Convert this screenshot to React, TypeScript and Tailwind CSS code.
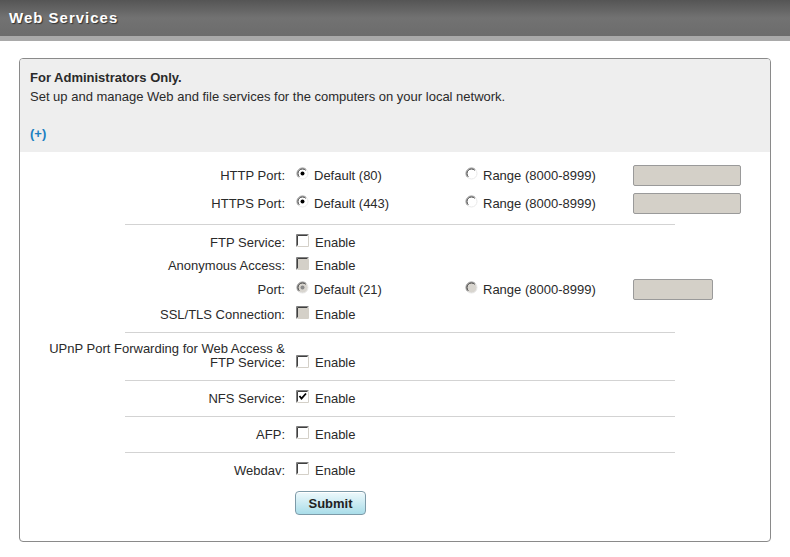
import React from "react";

function Radio({ checked = false, disabled = false }: { checked?: boolean; disabled?: boolean }) {
  return (
    <svg width="13" height="13" viewBox="0 0 13 13" className="shrink-0 -mt-[3px]">
      <circle cx="6.5" cy="6.5" r="5.5" fill={disabled ? "#d8d5cf" : "#ffffff"} />
      <path d="M2.6 10.4 A5.5 5.5 0 0 1 10.4 2.6" fill="none" stroke="#8a8a8a" strokeWidth="1" />
      <path d="M3.3 9.7 A4.5 4.5 0 0 1 9.7 3.3" fill="none" stroke="#404040" strokeWidth="1" />
      <path d="M10.4 2.6 A5.5 5.5 0 0 1 2.6 10.4" fill="none" stroke="#e8e8e8" strokeWidth="1" />
      {checked && <circle cx="6.5" cy="6.5" r="2" fill={disabled ? "#8a8a8a" : "#000000"} />}
    </svg>
  );
}

function Check({ checked = false, disabled = false }: { checked?: boolean; disabled?: boolean }) {
  return (
    <svg width="13" height="13" viewBox="0 0 13 13" className="shrink-0 -mt-[3px]">
      <rect x="0" y="0" width="13" height="13" fill="#ffffff" />
      <rect x="2" y="2" width="10" height="10" fill={disabled ? "#d4d0c8" : "#ffffff"} />
      <path d="M0.5 12.5 V0.5 H12.5" fill="none" stroke="#808080" strokeWidth="1" />
      <path d="M1.5 11.5 V1.5 H11.5" fill="none" stroke="#404040" strokeWidth="1" />
      <path d="M1.5 12.5 H12.5 V1.5" fill="none" stroke="#d4d0c8" strokeWidth="1" />
      {checked && <path d="M3.5 6 L5.5 8.5 L10 3.5" fill="none" stroke="#000000" strokeWidth="1.8" />}
    </svg>
  );
}

function Row({ label, children, className = "" }: { label: React.ReactNode; children: React.ReactNode; className?: string }) {
  return (
    <div className={`flex items-center h-[24px] ${className}`}>
      <div className="w-[265px] text-right shrink-0">{label}</div>
      <div className="ml-[11px] flex items-center">{children}</div>
    </div>
  );
}

function Opt({ children, checked, disabled }: { children: React.ReactNode; checked?: boolean; disabled?: boolean }) {
  return (
    <span className="flex items-center gap-[5px]">
      <Radio checked={checked} disabled={disabled} />
      <span>{children}</span>
    </span>
  );
}

function Enable({ checked, disabled }: { checked?: boolean; disabled?: boolean }) {
  return (
    <span className="flex items-center gap-[6px]">
      <Check checked={checked} disabled={disabled} />
      <span>Enable</span>
    </span>
  );
}

function PortInput({ w }: { w: string }) {
  return <div className={`${w} h-[21px] bg-[#d4d0c8] border border-[#9a9a9a] rounded-[2px]`} />;
}

function Divider() {
  return <div className="ml-[105px] w-[550px] h-px bg-[#d3d3d3]" />;
}

export default function App() {
  return (
    <div className="w-[790px] h-[557px] bg-white text-[#2a2a2a] text-[13px] leading-[19px]" style={{ fontFamily: '"Liberation Sans", Arial, sans-serif' }}>
      <div className="h-[36px] bg-gradient-to-b from-[#555555] via-[#727272] to-[#6c6c6c] flex items-center pl-[9px] pb-[2px]">
        <span className="text-white font-bold text-[15px] tracking-[1px] [text-shadow:1px_1px_1px_#333]">Web Services</span>
      </div>
      <div className="h-[5px] bg-[#a9a9a9]" />
      <div className="ml-[19px] mt-[17px] w-[752px] h-[484px] border border-[#8a8a8a] rounded-[4px] overflow-hidden">
        <div className="bg-[#eeeeee] px-[10px] pt-[9px] pb-[9px] h-[93px]">
          <div className="font-bold">For Administrators Only.</div>
          <div>Set up and manage Web and file services for the computers on your local network.</div>
          <div className="mt-[18px] font-bold text-[#1a7fc1]">(+)</div>
        </div>

        <div className="pt-[11px] pb-[9px] flex flex-col gap-[4px]">
          <Row label="HTTP Port:">
            <span className="w-[169px]"><Opt checked>Default (80)</Opt></span>
            <span className="w-[168px]"><Opt>Range (8000-8999)</Opt></span>
            <PortInput w="w-[108px]" />
          </Row>
          <Row label="HTTPS Port:">
            <span className="w-[169px]"><Opt checked>Default (443)</Opt></span>
            <span className="w-[168px]"><Opt>Range (8000-8999)</Opt></span>
            <PortInput w="w-[108px]" />
          </Row>
        </div>
        <Divider />

        <div className="pt-[5px] pb-[6px]">
          <Row label="FTP Service:"><Enable /></Row>
          <Row label="Anonymous Access:" className="-mt-px"><Enable disabled /></Row>
          <Row label="Port:"><span className="w-[169px]"><Opt checked disabled>Default (21)</Opt></span>
            <span className="w-[168px]"><Opt disabled>Range (8000-8999)</Opt></span>
            <PortInput w="w-[80px]" />
          </Row>
          <Row label="SSL/TLS Connection:" className="mt-px"><Enable disabled /></Row>
        </div>
        <Divider />

        <div className="pt-[9px] pb-[10px] flex items-end">
          <div className="w-[265px] text-right leading-[14px] shrink-0">
            UPnP Port Forwarding for Web Access &amp;<br />FTP Service:
          </div>
          <div className="ml-[11px] flex items-center h-[14px] leading-[14px]"><Enable /></div>
        </div>
        <Divider />

        <div className="pt-[5px] pb-[6px]">
          <Row label="NFS Service:"><Enable checked /></Row>
        </div>
        <Divider />

        <div className="pt-[5px] pb-[6px]">
          <Row label="AFP:"><Enable /></Row>
        </div>
        <Divider />

        <div className="pt-[5px]">
          <Row label="Webdav:"><Enable /></Row>
          <div className="ml-[275px] mt-[9px]">
            <button className="w-[71px] h-[24px] rounded-[4px] border border-[#7d9aa8] bg-gradient-to-b from-[#eef9fc] to-[#a9dde9] font-bold text-[13px] text-[#222] shadow-[inset_0_1px_0_#ffffff]">
              Submit
            </button>
          </div>
        </div>
      </div>
    </div>
  );
}
